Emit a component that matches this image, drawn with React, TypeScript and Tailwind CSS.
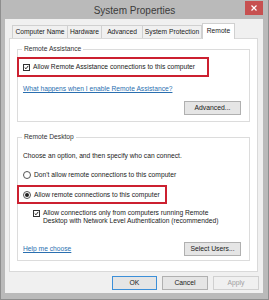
import React from "react";

const font = { fontFamily: '"Liberation Sans", Arial, sans-serif' };

function Check() {
  return (
    <span className="w-[7px] h-[7px] border border-[#333] bg-white flex items-center justify-center shrink-0">
      <svg width="7" height="7" viewBox="0 0 7 7">
        <path d="M1 3.5 L2.8 5.3 L6 1.2" stroke="#111" strokeWidth="1.3" fill="none" />
      </svg>
    </span>
  );
}

function Radio({ on }: { on?: boolean }) {
  return (
    <span className="w-[8px] h-[8px] rounded-full border border-[#555] bg-white flex items-center justify-center shrink-0">
      {on && <span className="w-[4px] h-[4px] rounded-full bg-[#222]" />}
    </span>
  );
}

function Btn({ children, w, cls = "" }: { children: React.ReactNode; w: string; cls?: string }) {
  return (
    <div className={`${w} h-[14px] flex items-center justify-center border text-[6.8px] ${cls}`}>{children}</div>
  );
}

export default function App() {
  return (
    <div
      className="w-[269px] h-[300px] bg-[#bababa] flex flex-col border-x border-b border-[#8e8e8e] text-[#1a1a1a] text-[6.7px] leading-[8px] whitespace-nowrap"
      style={font}
    >
      {/* title bar */}
      <div className="h-[19px] relative flex items-center justify-center">
        <span className="text-[10px] text-[#3a3a3a] pt-[3px]">System Properties</span>
        <div className="absolute right-[5px] top-[1px] w-[18px] h-[14px] bg-[#c75050] flex items-center justify-center">
          <svg width="6" height="6" viewBox="0 0 6 6">
            <path d="M0.5 0.5 L5.5 5.5 M5.5 0.5 L0.5 5.5" stroke="#fff" strokeWidth="1.2" />
          </svg>
        </div>
      </div>

      {/* body */}
      <div className="flex-1 ml-[4px] mr-[5px] mb-[6px] bg-[#f0f0f0] flex flex-col">
        {/* tabs */}
        <div className="h-[19px] flex items-end pl-[7px]">
          <div className="w-[56px] h-[13px] border border-b-0 border-[#d0d0d0] bg-[#f0f0f0] flex items-center justify-center">Computer Name</div>
          <div className="w-[34px] h-[13px] border border-b-0 border-l-0 border-[#d0d0d0] flex items-center justify-center">Hardware</div>
          <div className="w-[41px] h-[13px] border border-b-0 border-l-0 border-[#d0d0d0] flex items-center justify-center">Advanced</div>
          <div className="w-[59px] h-[13px] border border-b-0 border-l-0 border-[#d0d0d0] flex items-center justify-center">System Protection</div>
          <div className="w-[33px] h-[16px] border border-b-0 border-[#d0d0d0] bg-white flex items-center justify-center -mb-px relative z-10 pb-[2px]">Remote</div>
        </div>

        {/* panel */}
        <div className="h-[234px] ml-[4px] mr-[5px] bg-white border border-[#d9d9d9] flex flex-col px-[7px] pt-[10px]">
          {/* group 1 */}
          <div className="h-[73px] border border-[#dcdcdc] relative flex flex-col">
            <span className="absolute -top-[5px] left-[4px] bg-white px-[2px] text-[#333]">Remote Assistance</span>
            <div className="mt-[7px] -ml-px w-[192px] h-[20px] border-2 border-[#cc2030] flex items-center gap-[3px] pl-[4px]">
              <Check />
              <span>Allow Remote Assistance connections to this computer</span>
            </div>
            <div className="mt-[8px] pl-[5px] text-[#2a6fb0] underline">What happens when I enable Remote Assistance?</div>
            <div className="mt-[8px] flex justify-end pr-[8px]">
              <Btn w="w-[57px]" cls="bg-[#e5e5e5] border-[#b0b0b0]">Advanced...</Btn>
            </div>
          </div>

          {/* group 2 */}
          <div className="mt-[15px] h-[124px] border border-[#dcdcdc] relative flex flex-col">
            <span className="absolute -top-[5px] left-[4px] bg-white px-[2px] text-[#333]">Remote Desktop</span>
            <div className="mt-[14px] pl-[5px]">Choose an option, and then specify who can connect.</div>
            <div className="mt-[11px] pl-[5px] flex items-center gap-[3px]">
              <Radio />
              <span>Don't allow remote connections to this computer</span>
            </div>
            <div className="mt-[6px] -ml-px w-[150px] h-[19px] border-2 border-[#cc2030] flex items-center gap-[3px] pl-[4px]">
              <Radio on />
              <span>Allow remote connections to this computer</span>
            </div>
            <div className="mt-[5px] pl-[15px] flex items-start gap-[3px]">
              <span className="mt-[1px]"><Check /></span>
              <span>
                Allow connections only from computers running Remote
                <br />
                Desktop with Network Level Authentication (recommended)
              </span>
            </div>
            <div className="mt-[17px] flex items-center justify-between pl-[5px] pr-[8px]">
              <span className="text-[#2a6fb0] underline">Help me choose</span>
              <Btn w="w-[57px]" cls="bg-[#e5e5e5] border-[#b0b0b0]">Select Users...</Btn>
            </div>
          </div>
        </div>

        {/* bottom buttons */}
        <div className="mt-[4px] flex justify-end gap-[5px] pr-[4px]">
          <Btn w="w-[45px]" cls="bg-[#e5e5e5] border-[#3c8fd8]">OK</Btn>
          <Btn w="w-[46px]" cls="bg-[#e5e5e5] border-[#b0b0b0]">Cancel</Btn>
          <Btn w="w-[46px]" cls="bg-[#f0f0f0] border-[#d0d0d0] text-[#a0a0a0]">Apply</Btn>
        </div>
      </div>
    </div>
  );
}
